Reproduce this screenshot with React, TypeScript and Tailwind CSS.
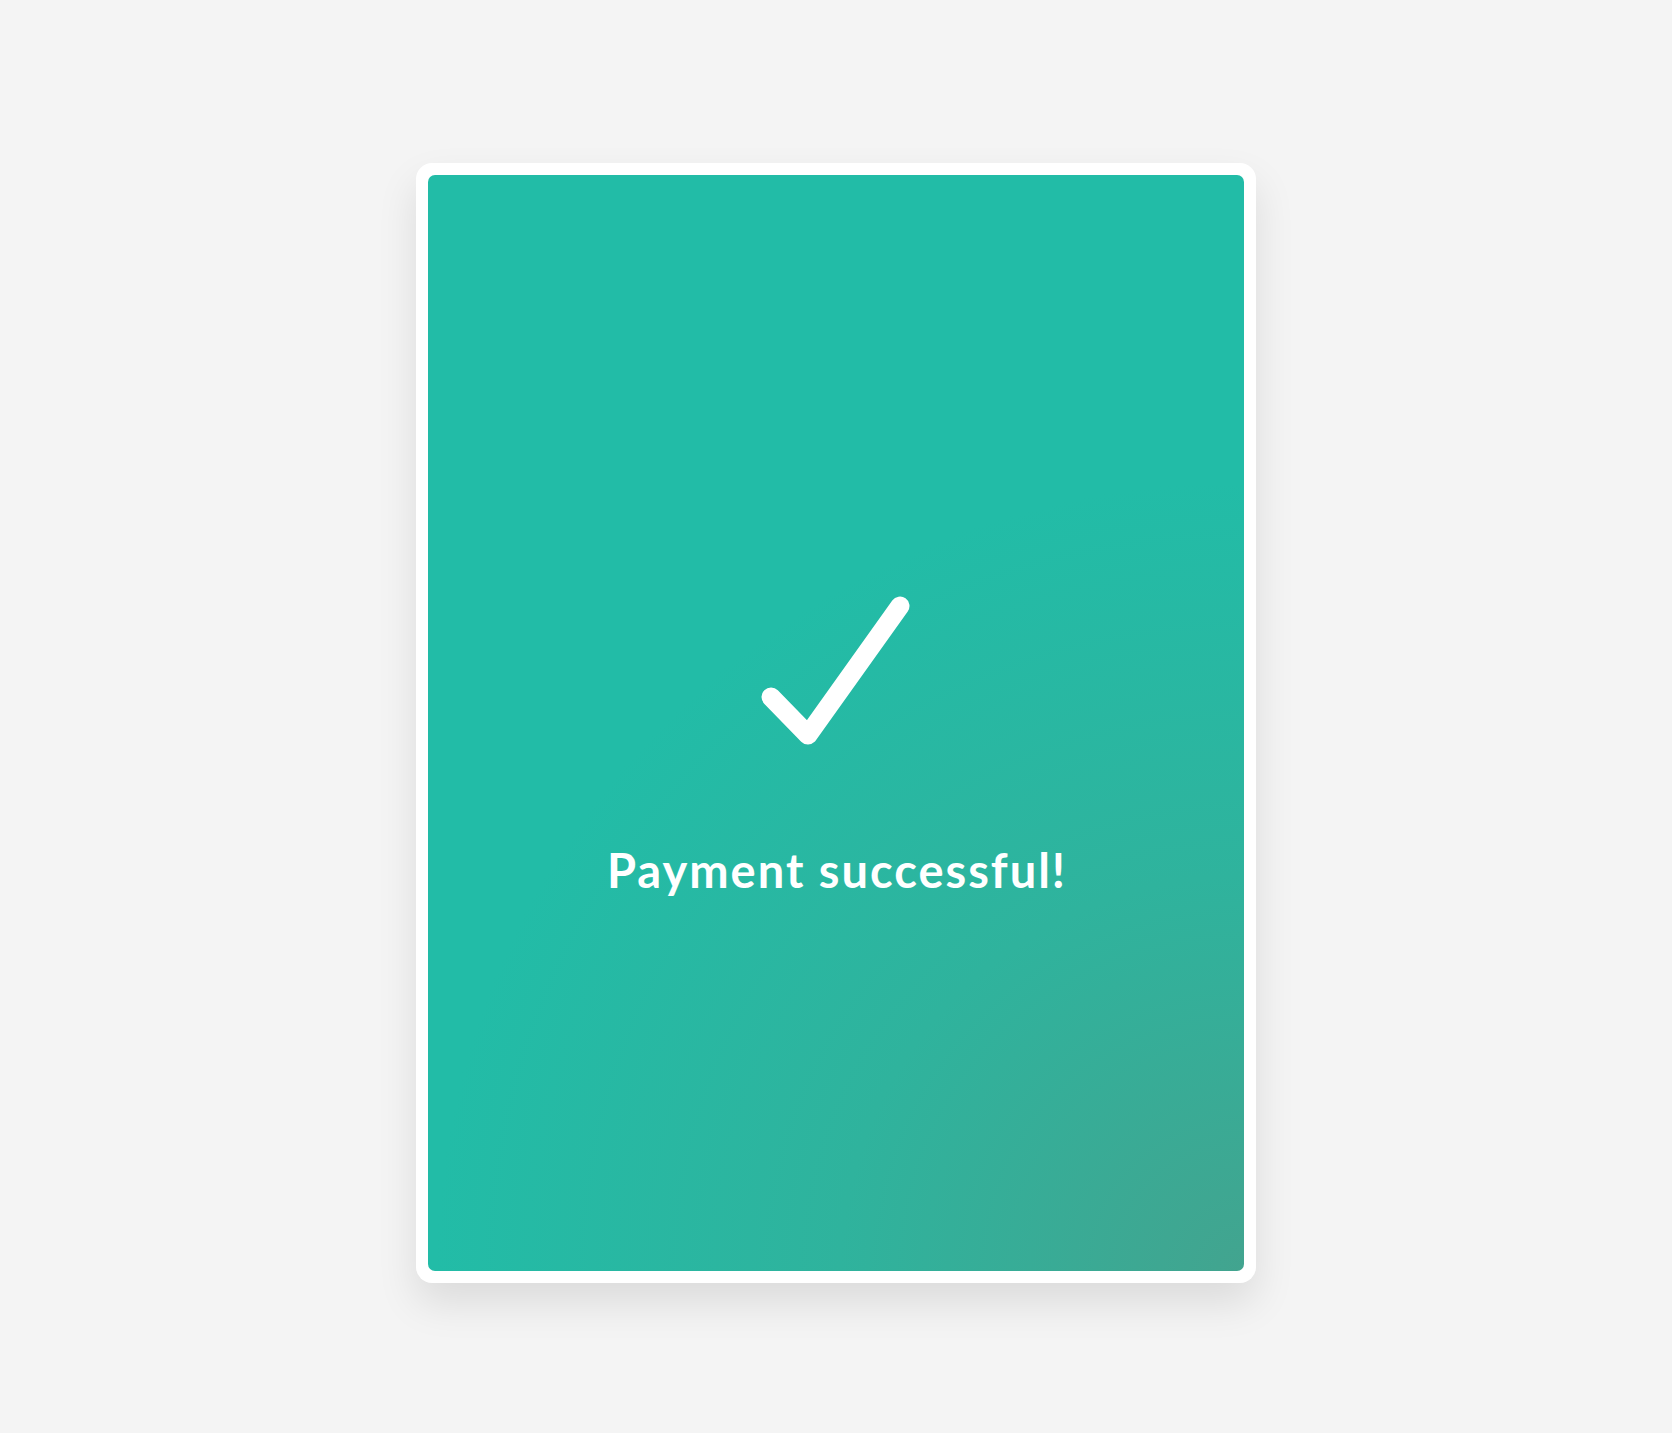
export default function App() {
  return (
    <div className="min-h-[1433px] w-full bg-[#f4f4f4] pt-[163px] flex justify-center" style={{ fontFamily: "Lato, 'Noto Sans', sans-serif" }}>
      <div className="w-[840px] h-[1120px] bg-white rounded-[16px] p-[12px] shadow-[0_20px_40px_rgba(0,0,0,0.10)]">
        <div className="h-full w-full rounded-[7px] bg-[radial-gradient(ellipse_110%_80%_at_100%_100%,#42a48f_0%,#2fb39d_45%,#22bca7_90%)] flex flex-col items-center pt-[415px]">
          <svg width="160" height="160" viewBox="0 0 160 160">
            <polyline
              points="15,107 52,145 144,16"
              fill="none"
              stroke="white"
              strokeWidth="19"
              strokeLinecap="round"
              strokeLinejoin="round"
            />
          </svg>
          <h1 className="mt-[97px] pl-[2px] text-white text-[47px] font-bold tracking-[2px] leading-none">Payment successful!</h1>
        </div>
      </div>
    </div>
  )
}
